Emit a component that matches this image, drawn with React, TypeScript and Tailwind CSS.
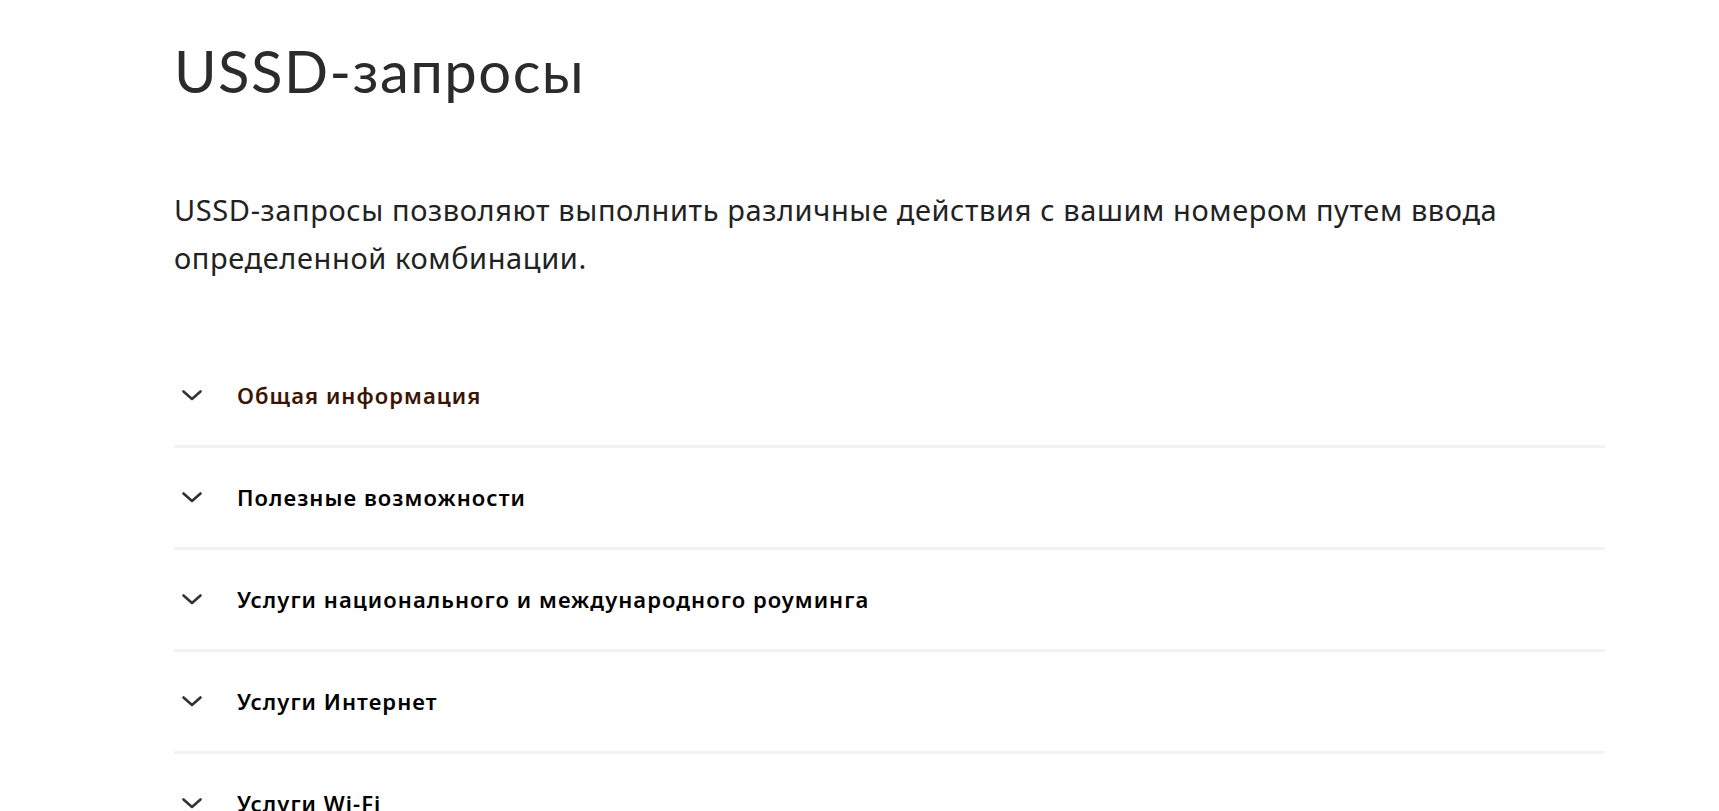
import React from "react";

const items = [
	"Общая информация",
	"Полезные возможности",
	"Услуги национального и международного роуминга",
	"Услуги Интернет",
	"Услуги Wi-Fi",
];

function Chevron() {
	return (
		<svg width="20" height="11" viewBox="0 0 20 11" fill="none">
			<path d="M1.5 1.5l8.5 7.5 8.5-7.5" stroke="#333333" strokeWidth="2.6" strokeLinecap="round" strokeLinejoin="round" />
		</svg>
	);
}

export default function App() {
	return (
		<div className="min-h-screen bg-white">
			<div className="ml-[174px] w-[1431px] pt-[36px]">
				<h1 className="font-['Lato',sans-serif] font-normal text-[58px] leading-[70px] tracking-[0.025em] text-[#2b2b2b]">
					USSD-запросы
				</h1>

				<p className="mt-[80px] font-['Noto_Sans',sans-serif] text-[29px] leading-[48px] tracking-[0.021em] text-[#222222]">
					USSD-запросы позволяют выполнить различные действия с вашим номером путем ввода определенной комбинации.
				</p>

				{/* accordion */}
				<div className="mt-[64px] flex flex-col">
					{items.map((title, i) => (
						<div key={title} className="flex h-[102px] items-center border-b-[3px] border-[#f2f2f2]">
							<div className="flex w-[63px] pl-[8px]">
								<Chevron />
							</div>
							<span
								className={
									"font-['Noto_Sans',sans-serif] font-semibold text-[22px] tracking-[0.048em] " +
									(i === 0 ? "text-[#3b1403]" : "text-black")
								}
							>
								{title}
							</span>
						</div>
					))}
				</div>
			</div>
		</div>
	);
}
